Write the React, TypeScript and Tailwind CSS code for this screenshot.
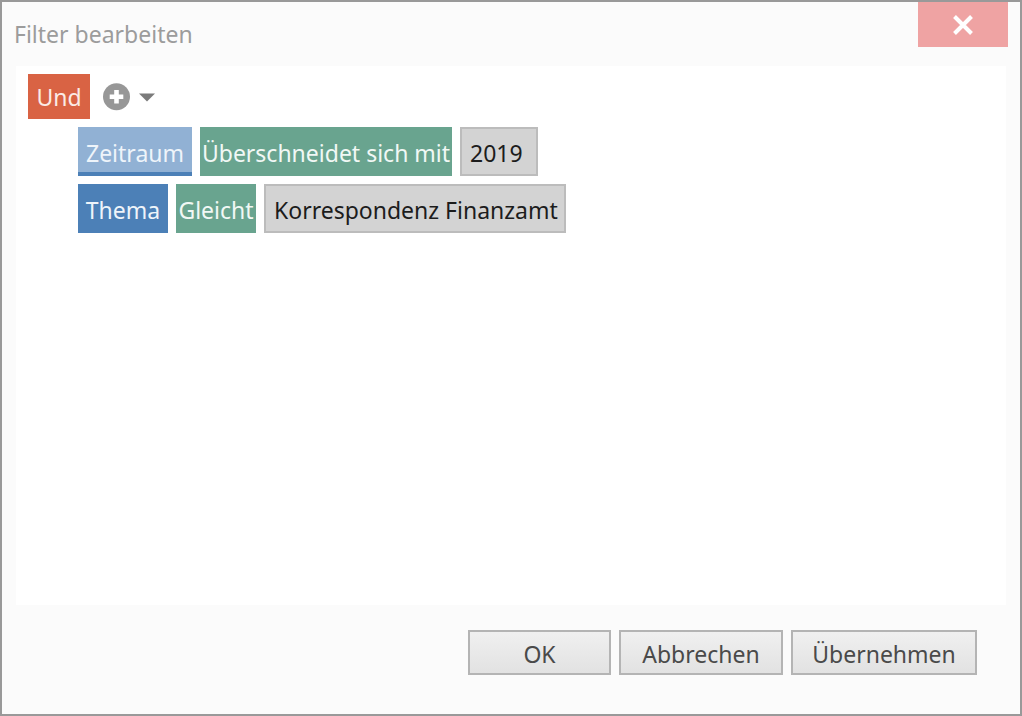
import { useState } from "react";

type Condition = {
  field: string;
  operator: string;
  value: string;
  fieldWidth: string;
  operatorWidth: string;
  valueWidth: string;
};

const conditions: Condition[] = [
  {
    field: "Zeitraum",
    operator: "Überschneidet sich mit",
    value: "2019",
    fieldWidth: "min-w-[114px]",
    operatorWidth: "min-w-[252px]",
    valueWidth: "min-w-[78px]",
  },
  {
    field: "Thema",
    operator: "Gleicht",
    value: "Korrespondenz Finanzamt",
    fieldWidth: "min-w-[90px]",
    operatorWidth: "min-w-[80px]",
    valueWidth: "min-w-[302px]",
  },
];

const actions = [
  { label: "OK", width: "min-w-[143px]" },
  { label: "Abbrechen", width: "min-w-[164px]" },
  { label: "Übernehmen", width: "min-w-[186px]" },
];

export default function App() {
  const [selected, setSelected] = useState(0);

  return (
    <main
      role="dialog"
      aria-labelledby="title"
      className="flex min-h-screen flex-col border-2 border-[#999999] bg-[#fbfbfb] font-['Noto_Sans','Open_Sans',sans-serif] text-[23px] leading-8 whitespace-nowrap"
    >
      <header className="flex h-16 items-start justify-between px-3">
        <h1 id="title" className="pt-4 text-[#9c9c9c]">
          Filter bearbeiten
        </h1>
        <button
          type="button"
          aria-label="Schließen"
          className="flex h-[45px] w-[90px] items-center justify-center bg-[#efa3a3]"
        >
          <svg viewBox="0 0 20 20" className="size-5" fill="none" stroke="white" strokeWidth="4">
            <path d="M1.5 1.5 18.5 18.5M18.5 1.5 1.5 18.5" />
          </svg>
        </button>
      </header>

      <section className="mx-[14px] flex grow flex-col gap-2 bg-white px-3 pt-2">
        <div className="flex items-center">
          <button type="button" className="h-[45px] min-w-[62px] bg-[#d96344] text-center text-[#fbebe6]">
            Und
          </button>
          <button type="button" aria-label="Bedingung hinzufügen" className="ml-3 flex items-center gap-2">
            <svg viewBox="0 0 28 28" className="size-7">
              <circle cx="14.5" cy="13.8" r="13.5" fill="#979797" />
              <path d="M14.5 7v13.6M7.7 13.8h13.6" stroke="white" strokeWidth="4.6" />
            </svg>
            <svg viewBox="0 0 18 10" className="h-[10px] w-[18px]">
              <path d="M1 1.5h16L9 9.5z" fill="#7b7b7b" />
            </svg>
          </button>
        </div>

        {conditions.map((c, i) => (
          <div key={c.field} className="ml-[50px] flex gap-2">
            <button
              type="button"
              onClick={() => setSelected(i)}
              className={`h-[49px] border-b-4 border-[#4c80b7] pt-1.5 text-center text-[#eef4fa] ${c.fieldWidth} ${
                selected === i ? "bg-[#91b1d4]" : "bg-[#4c80b7]"
              }`}
            >
              {c.field}
            </button>
            <button type="button" className={`h-[49px] bg-[#69a48f] pt-0.5 text-center text-[#f1f8f5] ${c.operatorWidth}`}>
              {c.operator}
            </button>
            <button
              type="button"
              className={`h-[49px] border-2 border-[#bcbcbc] bg-[#d3d3d3] pt-0.5 pl-2 text-left text-[#1c1c1c] ${c.valueWidth}`}
            >
              {c.value}
            </button>
          </div>
        ))}
      </section>

      <footer className="flex justify-end gap-2 pt-[25px] pr-[43px] pb-[39px]">
        {actions.map((a) => (
          <button
            key={a.label}
            type="button"
            className={`h-[45px] border-2 border-[#b4b4b4] bg-linear-to-b from-[#f0f0f0] to-[#e2e2e2] pt-0.5 text-center text-[#4a4a4a] ${a.width}`}
          >
            {a.label}
          </button>
        ))}
      </footer>
    </main>
  );
}
